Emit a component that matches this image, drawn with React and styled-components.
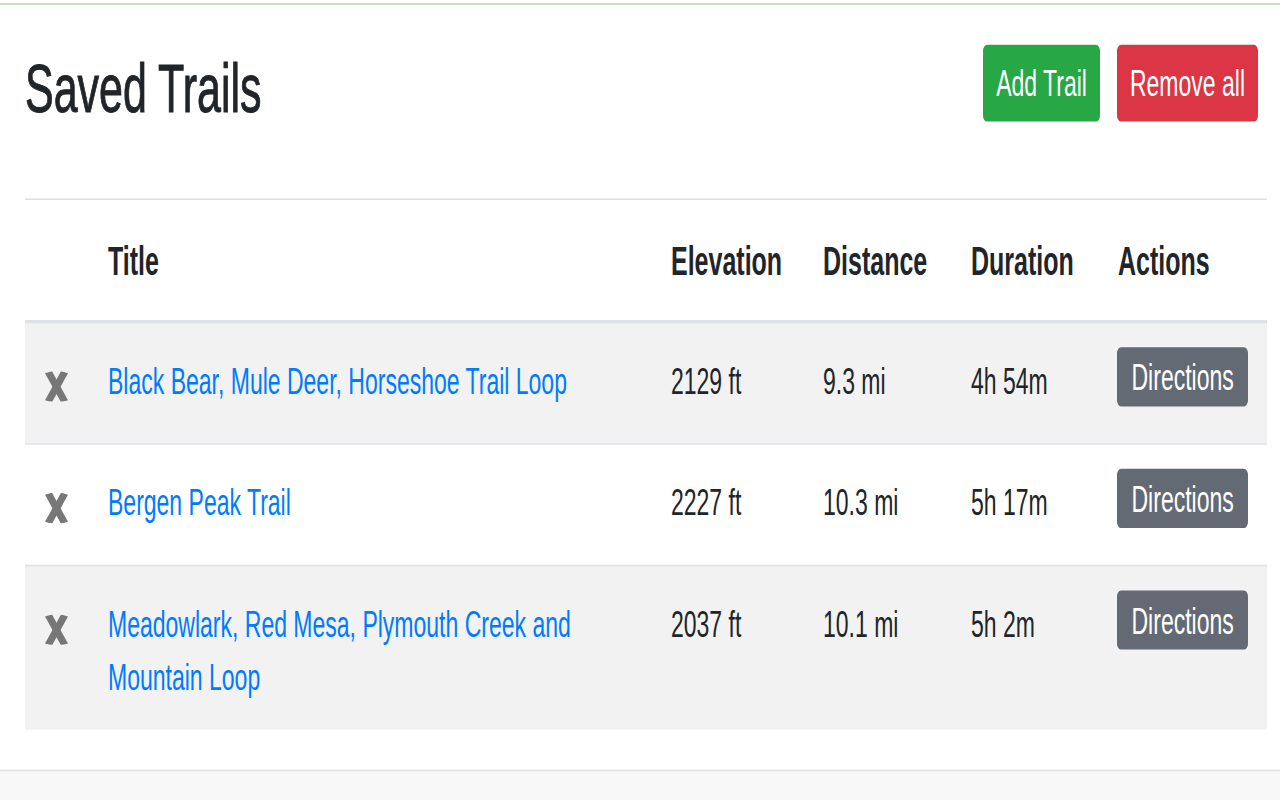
import React from 'react';
import styled, { createGlobalStyle } from 'styled-components';

const GlobalStyle = createGlobalStyle`
  html, body {
    margin: 0;
    padding: 0;
    height: 100%;
    overflow: hidden;
    background: #fff;
  }
`;

// the reference is stretched vertically, so the whole page is drawn at
// natural size and scaled on the y axis
const Page = styled.div`
  height: 500px;
  display: flex;
  flex-direction: column;
  transform: scaleY(1.6);
  transform-origin: top left;
  font-family: "Liberation Sans", Arial, sans-serif;
  color: #212529;
`;

const TopLine = styled.div`
  height: 1px;
  margin-top: 2px;
  background: #b9d6b5;
`;

const Main = styled.div`
  padding: 0 13px 0 25px;
`;

const Header = styled.div`
  display: flex;
  justify-content: space-between;
  align-items: flex-start;
  padding: 25px 0 42.5px;
  margin-right: 9px;
`;

const Title = styled.h1`
  margin: 2px 0 0;
  font-size: 43px;
  line-height: 51px;
  font-weight: 400;
  -webkit-text-stroke: 0.6px #212529;
`;

const Actions = styled.div`
  display: flex;
  gap: 17px;
`;

const Button = styled.button`
  display: flex;
  align-items: center;
  height: ${p => (p.$small ? '37.5px' : '47.5px')};
  padding: ${p => (p.$small ? '2px 13.5px 0' : '1px 12px 0')};
  border: 1px solid ${p => p.$bg};
  border-radius: 4px;
  background: ${p => p.$bg};
  color: #fff;
  font-family: inherit;
  font-size: 23px;
  cursor: pointer;
`;

const Table = styled.table`
  width: 1242px;
  border-collapse: collapse;
  table-layout: fixed;
`;

const Th = styled.th`
  text-align: left;
  font-size: 25px;
  line-height: 37.5px;
  font-weight: 700;
  padding: 20px 20px 17.5px;
  border-top: 1px solid #dee2e6;
  border-bottom: 2px solid #dee2e6;
`;

const Row = styled.tr`
  background: ${p => (p.$striped ? '#f2f2f2' : '#fff')};
`;

const Td = styled.td`
  vertical-align: top;
  font-size: 23px;
  line-height: 33px;
  padding: 20px 20px 16px;
  border-top: 1px solid #dee2e6;
`;

const IconCell = styled(Td)`
  padding-top: 30px;
`;

const ActionCell = styled(Td)`
  padding: 15px 19px 22.5px;
`;

const TrailLink = styled.a`
  color: #007bff;
  text-decoration: none;
`;

const Footer = styled.div`
  flex: 1;
  margin-top: 25px;
  border-top: 1px solid #e3e3e3;
  background: #f8f8f8;
`;

const RemoveIcon = () => (
  <svg width="23" height="19.4" viewBox="0 0 23 31" preserveAspectRatio="none" style={{ display: 'block' }}>
    <polygon points="0,2 7,0 23,29 16,31" fill="#777" />
    <polygon points="16,0 23,2 7,31 0,29" fill="#777" />
  </svg>
);

const trails = [
  { title: 'Black Bear, Mule Deer, Horseshoe Trail Loop', elevation: '2129 ft', distance: '9.3 mi', duration: '4h 54m' },
  { title: 'Bergen Peak Trail', elevation: '2227 ft', distance: '10.3 mi', duration: '5h 17m' },
  { title: 'Meadowlark, Red Mesa, Plymouth Creek and Mountain Loop', elevation: '2037 ft', distance: '10.1 mi', duration: '5h 2m' },
];

export default function App() {
  return (
    <>
      <GlobalStyle />
      <Page>
        <TopLine />
        <Main>
          <Header>
            <Title>Saved Trails</Title>
            <Actions>
              <Button $bg="#28a745">Add Trail</Button>
              <Button $bg="#dc3545">Remove all</Button>
            </Actions>
          </Header>
          <Table>
            <colgroup>
              <col style={{ width: 63 }} />
              <col style={{ width: 563 }} />
              <col style={{ width: 152 }} />
              <col style={{ width: 148 }} />
              <col style={{ width: 147 }} />
              <col style={{ width: 169 }} />
            </colgroup>
            <thead>
              <tr>
                <Th></Th>
                <Th>Title</Th>
                <Th>Elevation</Th>
                <Th>Distance</Th>
                <Th>Duration</Th>
                <Th>Actions</Th>
              </tr>
            </thead>
            <tbody>
              {trails.map((t, i) => (
                <Row key={t.title} $striped={i % 2 === 0}>
                  <IconCell><RemoveIcon /></IconCell>
                  <Td><TrailLink href="#">{t.title}</TrailLink></Td>
                  <Td>{t.elevation}</Td>
                  <Td>{t.distance}</Td>
                  <Td>{t.duration}</Td>
                  <ActionCell>
                    <Button $small $bg="#636a73">Directions</Button>
                  </ActionCell>
                </Row>
              ))}
            </tbody>
          </Table>
        </Main>
        <Footer />
      </Page>
    </>
  );
}
